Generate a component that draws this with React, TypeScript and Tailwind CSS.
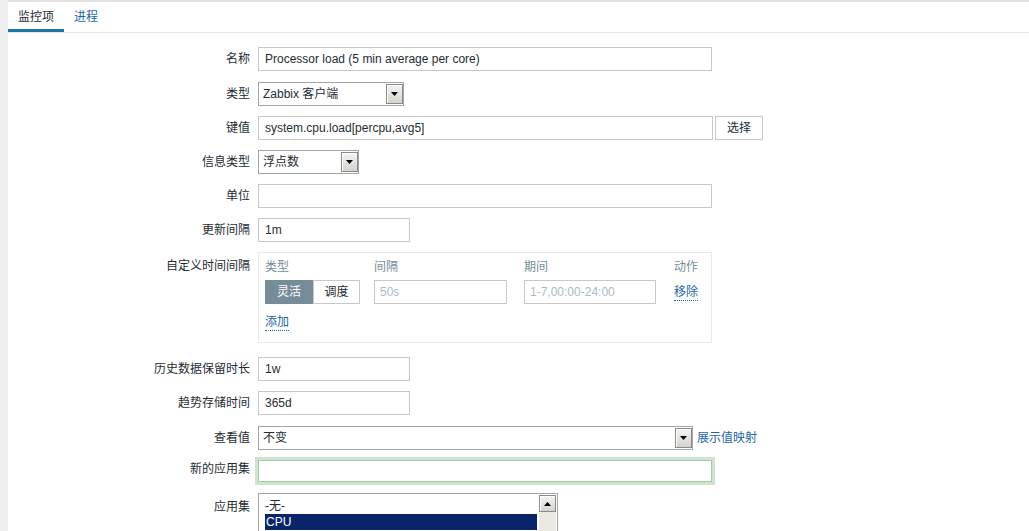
import React from "react";

const font = "font-['Liberation_Sans','Noto_Sans_CJK_SC',sans-serif]";

const Label = ({ text, top = false }: { text: string; top?: boolean }) => (
  <div
    className={`w-[250px] shrink-0 pr-[8px] text-right text-[12px] text-[#1f2c33] ${
      top ? "pt-[5px]" : "leading-[24px]"
    }`}
  >
    {text}
  </div>
);

const TextInput = ({ value, w }: { value?: string; w: string }) => (
  <div
    className={`${w} h-[24px] border border-[#c8c8c8] bg-white px-[6px] text-[12px] leading-[22px] text-[#1f2c33] whitespace-nowrap overflow-hidden`}
  >
    {value}
  </div>
);

const Arrow = ({ up, h = "h-[20px]" }: { up?: boolean; h?: string }) => (
  <div className={`flex ${h} w-[17px] items-center justify-center border border-[#8a8a8a] bg-gradient-to-b from-[#f4f4f4] to-[#d6d3cc] shadow-[inset_1px_1px_0_#fff]`}>
    <svg width="7" height="4" viewBox="0 0 7 4">
      <path d={up ? "M0 4L3.5 0L7 4Z" : "M0 0L7 0L3.5 4Z"} fill="#000" />
    </svg>
  </div>
);

const Select = ({ value, w }: { value: string; w: string }) => (
  <div
    className={`${w} h-[24px] flex items-center justify-between border border-[#a5a5a5] bg-white pl-[4px] text-[12px] text-[#1f2c33]`}
  >
    <span>{value}</span>
    <div className="h-[22px] flex items-center">
      <Arrow />
    </div>
  </div>
);

const Row = ({ children, className = "" }: { children: React.ReactNode; className?: string }) => (
  <div className={`flex items-start ${className}`}>{children}</div>
);

export default function App() {
  return (
    <div className={`${font} h-[531px] w-[1029px] overflow-hidden bg-[#f0f0f0] pl-[8px]`}>
      <div className="h-full bg-white border-t-[2px] border-[#e3e3e3]">
        {/* tabs */}
        <div className="flex h-[31px] items-end border-b border-[#e6e6e6] text-[12px]">
          <div className="flex h-[28px] w-[56px] items-center justify-center border-b-[3px] border-[#1d74a9] text-[#1f2c33]">
            监控项
          </div>
          <div className="flex h-[28px] w-[44px] items-center justify-center border-b-[3px] border-transparent text-[#1f65a6]">
            进程
          </div>
        </div>

        <div className="flex flex-col pt-[14px]">
          <Row>
            <Label text="名称" />
            <TextInput w="w-[454px]" value="Processor load (5 min average per core)" />
          </Row>
          <Row className="mt-[11px]">
            <Label text="类型" />
            <Select w="w-[146px]" value="Zabbix 客户端" />
          </Row>
          <Row className="mt-[10px]">
            <Label text="键值" />
            <TextInput w="w-[455px]" value="system.cpu.load[percpu,avg5]" />
            <div className="ml-[2px] h-[24px] w-[48px] border border-[#c8c8c8] bg-white text-center text-[12px] leading-[22px] text-[#1f2c33]">
              选择
            </div>
          </Row>
          <Row className="mt-[10px]">
            <Label text="信息类型" />
            <Select w="w-[101px]" value="浮点数" />
          </Row>
          <Row className="mt-[10px]">
            <Label text="单位" />
            <TextInput w="w-[454px]" />
          </Row>
          <Row className="mt-[10px]">
            <Label text="更新间隔" />
            <TextInput w="w-[152px]" value="1m" />
          </Row>
          <Row className="mt-[10px]">
            <Label text="自定义时间间隔" top />
            <div className="h-[91px] w-[454px] border border-[#eaeaea] bg-white px-[6px] pt-[6px] text-[12px]">
              <div className="flex text-[#768d99] leading-[16px]">
                <div className="w-[109px]">类型</div>
                <div className="w-[150px]">间隔</div>
                <div className="w-[150px]">期间</div>
                <div>动作</div>
              </div>
              <div className="mt-[5px] flex items-center">
                <div className="flex w-[109px]">
                  <div className="h-[24px] w-[48px] bg-[#768d99] text-center leading-[24px] text-white">灵活</div>
                  <div className="h-[24px] w-[47px] border border-[#c8c8c8] text-center leading-[22px] text-[#1f2c33]">
                    调度
                  </div>
                </div>
                <div className="w-[150px]">
                  <div className="h-[24px] w-[133px] border border-[#c8c8c8] px-[5px] leading-[22px] text-[#acbbc2]">50s</div>
                </div>
                <div className="w-[150px]">
                  <div className="h-[24px] w-[132px] border border-[#c8c8c8] px-[5px] leading-[22px] text-[#acbbc2]">
                    1-7,00:00-24:00
                  </div>
                </div>
                <div className="text-[#1f65a6] border-b border-dotted border-[#1f65a6] leading-[16px]">移除</div>
              </div>
              <div className="mt-[10px] flex">
                <span className="text-[#1f65a6] border-b border-dotted border-[#1f65a6] leading-[16px]">添加</span>
              </div>
            </div>
          </Row>
          <Row className="mt-[14px]">
            <Label text="历史数据保留时长" />
            <TextInput w="w-[152px]" value="1w" />
          </Row>
          <Row className="mt-[10px]">
            <Label text="趋势存储时间" />
            <TextInput w="w-[152px]" value="365d" />
          </Row>
          <Row className="mt-[11px]">
            <Label text="查看值" />
            <Select w="w-[435px]" value="不变" />
            <span className="ml-[4px] text-[12px] leading-[24px] text-[#1f65a6]">展示值映射</span>
          </Row>
          <Row className="mt-[7px]">
            <Label text="新的应用集" />
            <div className="-ml-[3px] h-[28px] w-[460px] border-[3px] border-[#cfe4cf]">
              <div className="h-full w-full border border-[#a9c9a9] bg-white" />
            </div>
          </Row>
          <Row className="mt-[8px]">
            <Label text="应用集" top />
            <div className="flex h-[60px] w-[300px] border border-[#a5a5a5] bg-white p-[1px]">
              <div className="flex-1 pl-[5px] pr-[2px] pt-[3px] text-[12px] leading-[16px] text-[#1f2c33]">
                <div>-无-</div>
                <div className="bg-[#0a246a] text-white pl-[1px]">CPU</div>
              </div>
              <div className="w-[17px] bg-[#ebe9e3]">
                <Arrow up h="h-[17px]" />
              </div>
            </div>
          </Row>
        </div>
      </div>
    </div>
  );
}
